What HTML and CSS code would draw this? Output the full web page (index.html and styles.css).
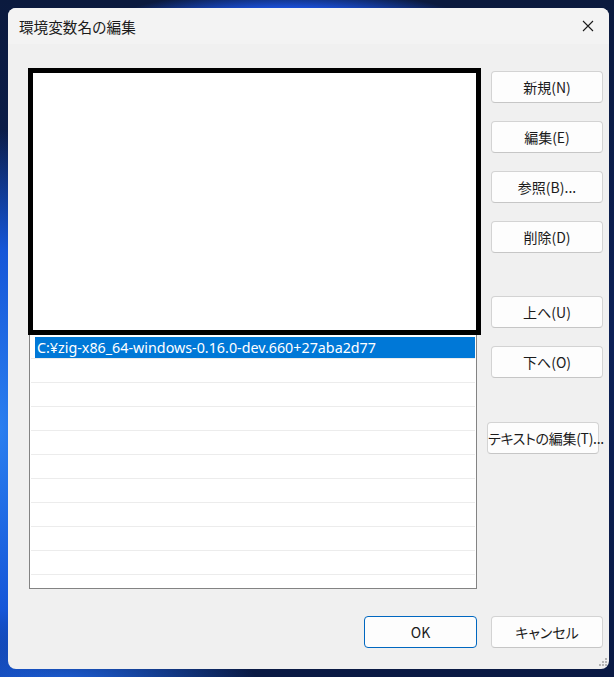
FILE: index.html
```html
<!DOCTYPE html>
<html lang="ja">
<head>
<meta charset="utf-8">
<title>環境変数名の編集</title>
<link rel="stylesheet" href="styles.css">
</head>
<body>
<div class="desktop">
  <div class="window">
    <div class="titlebar">
      <span class="title">環境変数名の編集</span>
      <span class="close" aria-label="閉じる">
        <svg width="12" height="12" viewBox="0 0 12 12"><path d="M1 1 L11 11 M11 1 L1 11" stroke="#1b1b1b" stroke-width="1.1" fill="none"/></svg>
      </span>
    </div>
    <div class="main">
      <div class="listbox">
        <div class="row"></div><div class="row"></div><div class="row"></div><div class="row"></div>
        <div class="row"></div><div class="row"></div><div class="row"></div><div class="row"></div>
        <div class="row"></div><div class="row"></div><div class="row"></div>
        <div class="row selected"><span class="item">C:¥zig-x86_64-windows-0.16.0-dev.660+27aba2d77</span></div>
        <div class="row"></div><div class="row"></div><div class="row"></div><div class="row"></div>
        <div class="row"></div><div class="row"></div><div class="row"></div><div class="row"></div>
        <div class="row last"></div>
      </div>
      <div class="buttons">
        <button class="btn">新規(N)</button>
        <button class="btn">編集(E)</button>
        <button class="btn">参照(B)...</button>
        <button class="btn">削除(D)</button>
        <button class="btn gap1">上へ(U)</button>
        <button class="btn">下へ(O)</button>
        <button class="btn gap2 shift">テキストの編集(T)...</button>
      </div>
    </div>
    <div class="footer">
      <button class="btn default">OK</button>
      <button class="btn">キャンセル</button>
    </div>
    <div class="redact"></div>
    <div class="grip">
      <svg width="8" height="8" viewBox="0 0 8 8" fill="#b5b5b5"><rect x="6" y="0" width="2" height="2"/><rect x="3" y="3" width="2" height="2"/><rect x="6" y="3" width="2" height="2"/><rect x="0" y="6" width="2" height="2"/><rect x="3" y="6" width="2" height="2"/><rect x="6" y="6" width="2" height="2"/></svg>
    </div>
  </div>
</div>
</body>
</html>
```
FILE: styles.css
```css
html, body {
  margin: 0;
  padding: 0;
}
body {
  width: 614px;
  height: 677px;
  overflow: hidden;
  font-family: "Noto Sans CJK JP", "Noto Sans", sans-serif;
}
.desktop {
  width: 614px;
  height: 677px;
  padding: 8px 0 0 8px;
  box-sizing: border-box;
  background:
    radial-gradient(ellipse 190px 40px at 290px 30px, #2f6df0 0%, #1a4fd8 55%, rgba(20,60,190,0) 100%),
    radial-gradient(ellipse 90px 300px at 0px 430px, #2a7ff0 0%, #1556d8 60%, rgba(20,60,190,0) 100%),
    radial-gradient(ellipse 200px 70px at 60px 690px, #1e66e8 0%, rgba(20,80,210,0) 100%),
    linear-gradient(180deg, #0b1a3e 0%, #0c2056 50%, #0a1a44 100%);
}
.window {
  position: relative;
  width: 601px;
  height: 661px;
  border-radius: 8px;
  overflow: hidden;
  background: #f0f0f0;
  display: flex;
  flex-direction: column;
}
.titlebar {
  height: 36px;
  flex: none;
  background: #f3f3f3;
  display: flex;
  align-items: center;
  justify-content: space-between;
  padding: 0 15px 0 11px;
}
.title {
  font-size: 14.6px;
  color: #1a1a1a;
  padding-top: 1px;
}
.close {
  display: flex;
  width: 12px;
  height: 12px;
}
.main {
  display: flex;
  padding: 25px 0 0 21px;
  gap: 14px;
}
.listbox {
  width: 448px;
  height: 520px;
  box-sizing: border-box;
  border: 1px solid #838383;
  background: #fff;
  padding: 1px 0 0;
  overflow: hidden;
}
.row {
  height: 24px;
  box-sizing: border-box;
  margin: 0 1px;
  border-bottom: 1px solid #ececec;
  display: flex;
}
.row.selected {
  padding: 2px 0 0 4px;
}
.item {
  flex: 1;
  background: #0078d7;
  color: #fff;
  font-family: "Noto Sans", sans-serif;
  font-size: 14.3px;
  line-height: 21px;
  padding-left: 2px;
  white-space: nowrap;
}
.buttons {
  display: flex;
  flex-direction: column;
  gap: 18px;
  padding-top: 2px;
  width: 112px;
}
.btn {
  width: 112px;
  height: 32px;
  box-sizing: border-box;
  border: 1px solid #d3d3d3;
  border-bottom-color: #c6c6c6;
  border-radius: 4px;
  background: #fdfdfd;
  color: #1b1b1b;
  font-family: "Noto Sans CJK JP", "Noto Sans", sans-serif;
  font-size: 14px;
  font-feature-settings: "palt";
  padding: 0;
  white-space: nowrap;
}
.gap1 {
  margin-top: 25px;
}
.gap2 {
  margin-top: 26px;
}
.shift {
  margin-left: -4px;
  letter-spacing: -0.3px;
}
.footer {
  display: flex;
  justify-content: flex-end;
  gap: 14px;
  padding: 27px 6px 0 0;
}
.btn.default {
  border: 1px solid #0067c0;
  width: 113px;
}
.redact {
  position: absolute;
  left: 20px;
  top: 60px;
  width: 453px;
  height: 267px;
  box-sizing: border-box;
  border: 5px solid #000;
  background: #fff;
}
.grip {
  position: absolute;
  right: 2px;
  bottom: 3px;
  width: 8px;
  height: 8px;
  display: flex;
}
```
